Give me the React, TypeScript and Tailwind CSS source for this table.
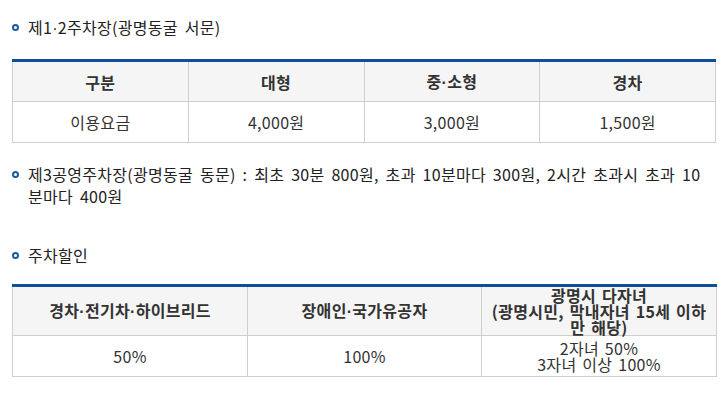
const font = { fontFamily: '"Malgun Gothic", "Noto Sans CJK KR", "Noto Sans", sans-serif' }

function Dot() {
  return <span style={{ fontFamily: '"Liberation Sans", sans-serif' }}>·</span>
}

function Bullet() {
  return (
    <span className="mt-[8px] mr-[9px] h-[7px] w-[7px] shrink-0 rounded-full border-2 border-[#1e5aa3]"></span>
  )
}

function Heading({ children }: { children: React.ReactNode }) {
  return (
    <div className="flex items-start text-[16px] leading-[22px] tracking-[0.3px] [word-spacing:3px] text-[#222]">
      <Bullet />
      <p>{children}</p>
    </div>
  )
}

const feeHead: React.ReactNode[] = ['구분', '대형', <>중<Dot />소형</>, '경차']
const feeBody = ['이용요금', '4,000원', '3,000원', '1,500원']

export default function App() {
  return (
    <div className="bg-white px-[12px] pt-[16px] w-[728px] h-[402px]" style={font}>
      <Heading>제1<Dot />2주차장(광명동굴 서문)</Heading>

      <table className="mt-[19px] w-[704px] table-fixed border-collapse border-t-[3px] border-t-[#0d4f9e] text-[16px] tracking-[0.3px] text-[#333]">
        <thead>
          <tr className="bg-[#f5f5f5] h-[41px]">
            {feeHead.map((h, i) => (
              <th key={i} className="border border-[#cfcfcf] border-t-0 font-bold text-center">{h}</th>
            ))}
          </tr>
        </thead>
        <tbody>
          <tr className="h-[41px]">
            {feeBody.map((c) => (
              <td key={c} className="border border-[#cfcfcf] text-center">{c}</td>
            ))}
          </tr>
        </tbody>
      </table>

      <div className="mt-[20px] pr-[12px]">
        <Heading>제3공영주차장(광명동굴 동문) : 최초 30분 800원, 초과 10분마다 300원, 2시간 초과시 초과 10분마다 400원</Heading>
      </div>

      <div className="mt-[37px]">
        <Heading>주차할인</Heading>
      </div>

      <table className="mt-[18px] w-[704px] table-fixed border-collapse border-t-[3px] border-t-[#0d4f9e] text-[16px] tracking-[0.3px] [word-spacing:2px] text-[#333]">
        <colgroup>
          <col className="w-[235px]" />
          <col className="w-[234px]" />
          <col className="w-[235px]" />
        </colgroup>
        <thead>
          <tr className="bg-[#f5f5f5] h-[50px] leading-[16px]">
            <th className="border border-[#cfcfcf] border-t-0 font-bold text-center">경차<Dot />전기차<Dot />하이브리드</th>
            <th className="border border-[#cfcfcf] border-t-0 font-bold text-center">장애인<Dot />국가유공자</th>
            <th className="border border-[#cfcfcf] border-t-0 font-bold text-center px-[6px]">
              광명시 다자녀
              <br />
              (광명시민, 막내자녀 15세 이하 만 해당)
            </th>
          </tr>
        </thead>
        <tbody>
          <tr className="h-[41px] leading-[16px]">
            <td className="border border-[#cfcfcf] text-center">50%</td>
            <td className="border border-[#cfcfcf] text-center">100%</td>
            <td className="border border-[#cfcfcf] text-center">
              2자녀 50%
              <br />
              3자녀 이상 100%
            </td>
          </tr>
        </tbody>
      </table>
    </div>
  )
}
